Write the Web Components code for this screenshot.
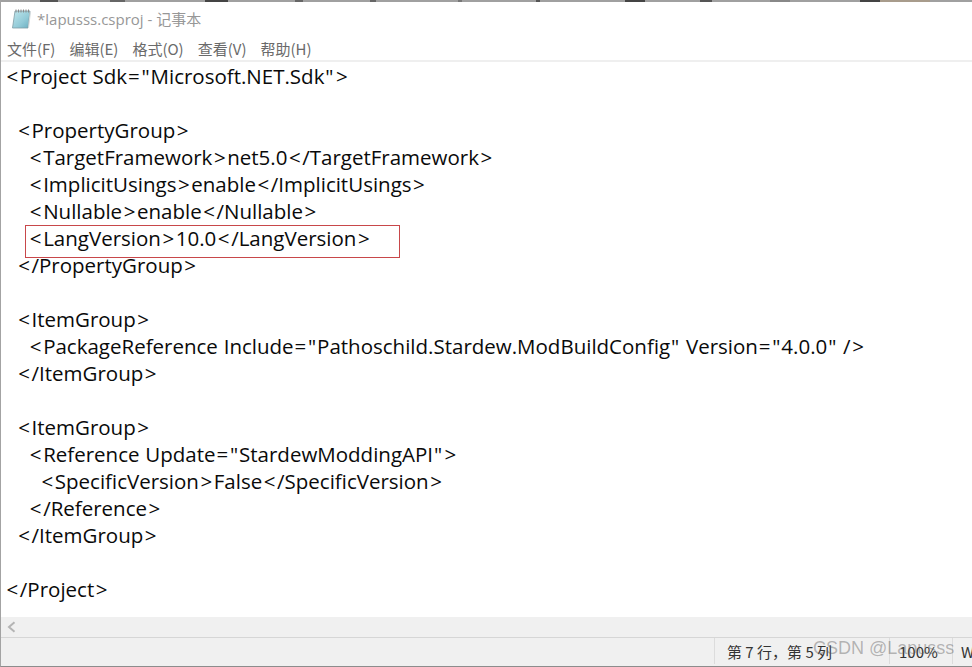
<!doctype html>
<html lang="zh">
<head>
<meta charset="utf-8">
<title>lapusss.csproj</title>
<style>
  html, body { margin: 0; height: 100%; background: #fff; }
  body { overflow: hidden; }
</style>
</head>
<body>
<notepad-window>
  <note-title slot="title">*lapusss.csproj - 记事本</note-title>
  <note-menu slot="menu">
    <span>文件(F)</span><span>编辑(E)</span><span>格式(O)</span><span>查看(V)</span><span>帮助(H)</span>
  </note-menu>
  <note-editor slot="editor"></note-editor>
  <note-status slot="status"></note-status>
</notepad-window>

<script>
const CJK = `"Noto Sans CJK SC", "Noto Sans", sans-serif`;

// dark scraps of whatever window sat above, along the top edge: [from, to, colour]
const EDGE = [[40,58,"#555"],[110,125,"#666"],[205,228,"#444"],[295,303,"#666"],[370,376,"#666"],[458,462,"#777"],
  [536,540,"#555"],[625,645,"#444"],[700,712,"#555"],[770,790,"#888"],[860,880,"#444"],[880,930,"#a89c8c"]];

// outer frame: title, menu, text area, scrollbar, status, stacked by flow
class NotepadWindow extends HTMLElement {
  constructor() {
    super();
    this.attachShadow({ mode: "open" }).innerHTML = `<style>
      :host { display: flex; flex-direction: column; position: relative; width: 972px; height: 667px;
        box-sizing: border-box; border-left: 1px solid #a3a3a3;
        border-bottom: 1px solid #8c8c8c; background: #fff; overflow: hidden; }
      .edge { height: 2px; flex: none; margin-left: -1px; }
      .mark { position: absolute; left: 812px; top: 636px; font: 18px/24px "Liberation Sans", Arial, sans-serif;
        color: rgba(90,90,90,.42); white-space: nowrap; pointer-events: none; }
    </style>
    <div class="edge"></div>
    <slot name="title"></slot><slot name="menu"></slot><slot name="editor"></slot><slot name="status"></slot>
    <div class="mark">CSDN @Lapusss</div>`;
    let at = 0, parts = [];
    for (const [a, b, c] of EDGE) {
      parts.push(`#a0a0a0 ${at}px ${a}px`, `${c} ${a}px ${b}px`);
      at = b;
    }
    parts.push(`#a0a0a0 ${at}px 972px`);
    this.shadowRoot.querySelector(".edge").style.background = `linear-gradient(90deg, ${parts.join(", ")})`;
  }
}

class NoteTitle extends HTMLElement {
  constructor() {
    super();
    this.attachShadow({ mode: "open" }).innerHTML = `<style>
      :host { display: flex; align-items: center; gap: 5px; height: 34px; padding: 0 0 0 9px; flex: none;
        font: 15px/20px "Open Sans", ${CJK}; color: #979797; }
      svg { flex: none; }
    </style>
    <svg width="22" height="22" viewBox="0 0 22 22" aria-hidden="true">
      <defs><linearGradient id="pg" x1="0" y1="0" x2="1" y2="1">
        <stop offset="0" stop-color="#c0e6ec"/><stop offset=".6" stop-color="#93cbd8"/><stop offset="1" stop-color="#6aaec0"/>
      </linearGradient></defs>
      <path d="M5 3h15L18 20H2.5z" fill="url(#pg)" stroke="#7f9da6" stroke-width=".8"/>
      <path d="M6 1.5v3M8.5 1.5v3M11 1.5v3M13.5 1.5v3M16 1.5v3M18.5 1.5v3" stroke="#8a8a8a" stroke-width="1"/>
      <path d="M18 20l2-17 1 1-2 16z" fill="#d5dbdd"/>
    </svg>
    <slot></slot>`;
  }
}

class NoteMenu extends HTMLElement {
  constructor() {
    super();
    this.attachShadow({ mode: "open" }).innerHTML = `<style>
      :host { display: flex; gap: 14px; height: 26px; padding: 0 0 0 6px; flex: none; box-sizing: border-box;
        font: 15px/26px ${CJK}; color: #6a6a6a; border-bottom: 2px solid #efefef; white-space: nowrap; }
    </style><slot></slot>`;
  }
}

// document text; the boxed line gets an overlay outline
const SOURCE = [
  `<Project Sdk="Microsoft.NET.Sdk">`,
  ``,
  `  <PropertyGroup>`,
  `    <TargetFramework>net5.0</TargetFramework>`,
  `    <ImplicitUsings>enable</ImplicitUsings>`,
  `    <Nullable>enable</Nullable>`,
  `    <LangVersion>10.0</LangVersion>`,
  `  </PropertyGroup>`,
  ``,
  `  <ItemGroup>`,
  `    <PackageReference Include="Pathoschild.Stardew.ModBuildConfig" Version="4.0.0" />`,
  `  </ItemGroup>`,
  ``,
  `  <ItemGroup>`,
  `    <Reference Update="StardewModdingAPI">`,
  `      <SpecificVersion>False</SpecificVersion>`,
  `    </Reference>`,
  `  </ItemGroup>`,
  ``,
  `</Project>`,
];

// the reference font sets these symbols wider than Open Sans does
function markup(s) {
  return s.replace(/[<>="]/g, (c) => {
    const cls = c === "<" || c === ">" ? "a" : "q";
    const ch = c === "<" ? "&lt;" : c === ">" ? "&gt;" : c;
    return `<b class="${cls}">${ch}</b>`;
  });
}

class NoteEditor extends HTMLElement {
  constructor() {
    super();
    this.attachShadow({ mode: "open" }).innerHTML = `<style>
      :host { display: block; flex: 1; min-height: 0; position: relative; background: #fff; }
      pre { margin: 0; padding: 1px 0 0 4px; font: 20.5px/27px "Open Sans", sans-serif; word-spacing: .5px; color: #0a0a0a; }
      b { font-weight: inherit; }
      .a { padding: 0 1.55px; }
      .q { padding: 0 .9px; }
      .box { position: absolute; left: 24px; top: 163px; width: 375px; height: 33px;
        box-sizing: border-box; outline: 1px solid #c8474a; outline-offset: -1px; }
    </style><pre></pre><div class="box"></div>`;
    this.shadowRoot.querySelector("pre").innerHTML = markup(SOURCE.join("\n"));
  }
}

// horizontal scrollbar strip plus the status cells underneath
class NoteStatus extends HTMLElement {
  constructor() {
    super();
    this.attachShadow({ mode: "open" }).innerHTML = `<style>
      :host { display: block; flex: none; background: #f0f0f0; font: 15px/28px ${CJK}; color: #333; }
      .bar { height: 20px; display: flex; align-items: center; padding-left: 6px; border-bottom: 1px solid #d6d6d6; }
      .cells { display: flex; height: 28px; justify-content: flex-end; white-space: nowrap; }
      .cell { box-sizing: border-box; border-left: 1px solid #dcdcdc; padding-left: 12px; overflow: hidden; margin-bottom: 2px; }
      .pos { width: 175px; }
      .zoom { width: 63px; padding-left: 9px; }
      .enc { width: 20px; padding-left: 8px; overflow: visible; }
    </style>
    <div class="bar"><svg width="9" height="12" viewBox="0 0 9 12" aria-hidden="true"><path d="M7.5 1.2L2 6l5.5 4.8" fill="none" stroke="#b4b4b4" stroke-width="2"/></svg></div>
    <div class="cells">
      <div class="cell pos">第 7 行，第 5 列</div>
      <div class="cell zoom">100%</div>
      <div class="cell enc">W</div>
    </div>`;
  }
}

customElements.define("notepad-window", NotepadWindow);
customElements.define("note-title", NoteTitle);
customElements.define("note-menu", NoteMenu);
customElements.define("note-editor", NoteEditor);
customElements.define("note-status", NoteStatus);
</script>
</body>
</html>
